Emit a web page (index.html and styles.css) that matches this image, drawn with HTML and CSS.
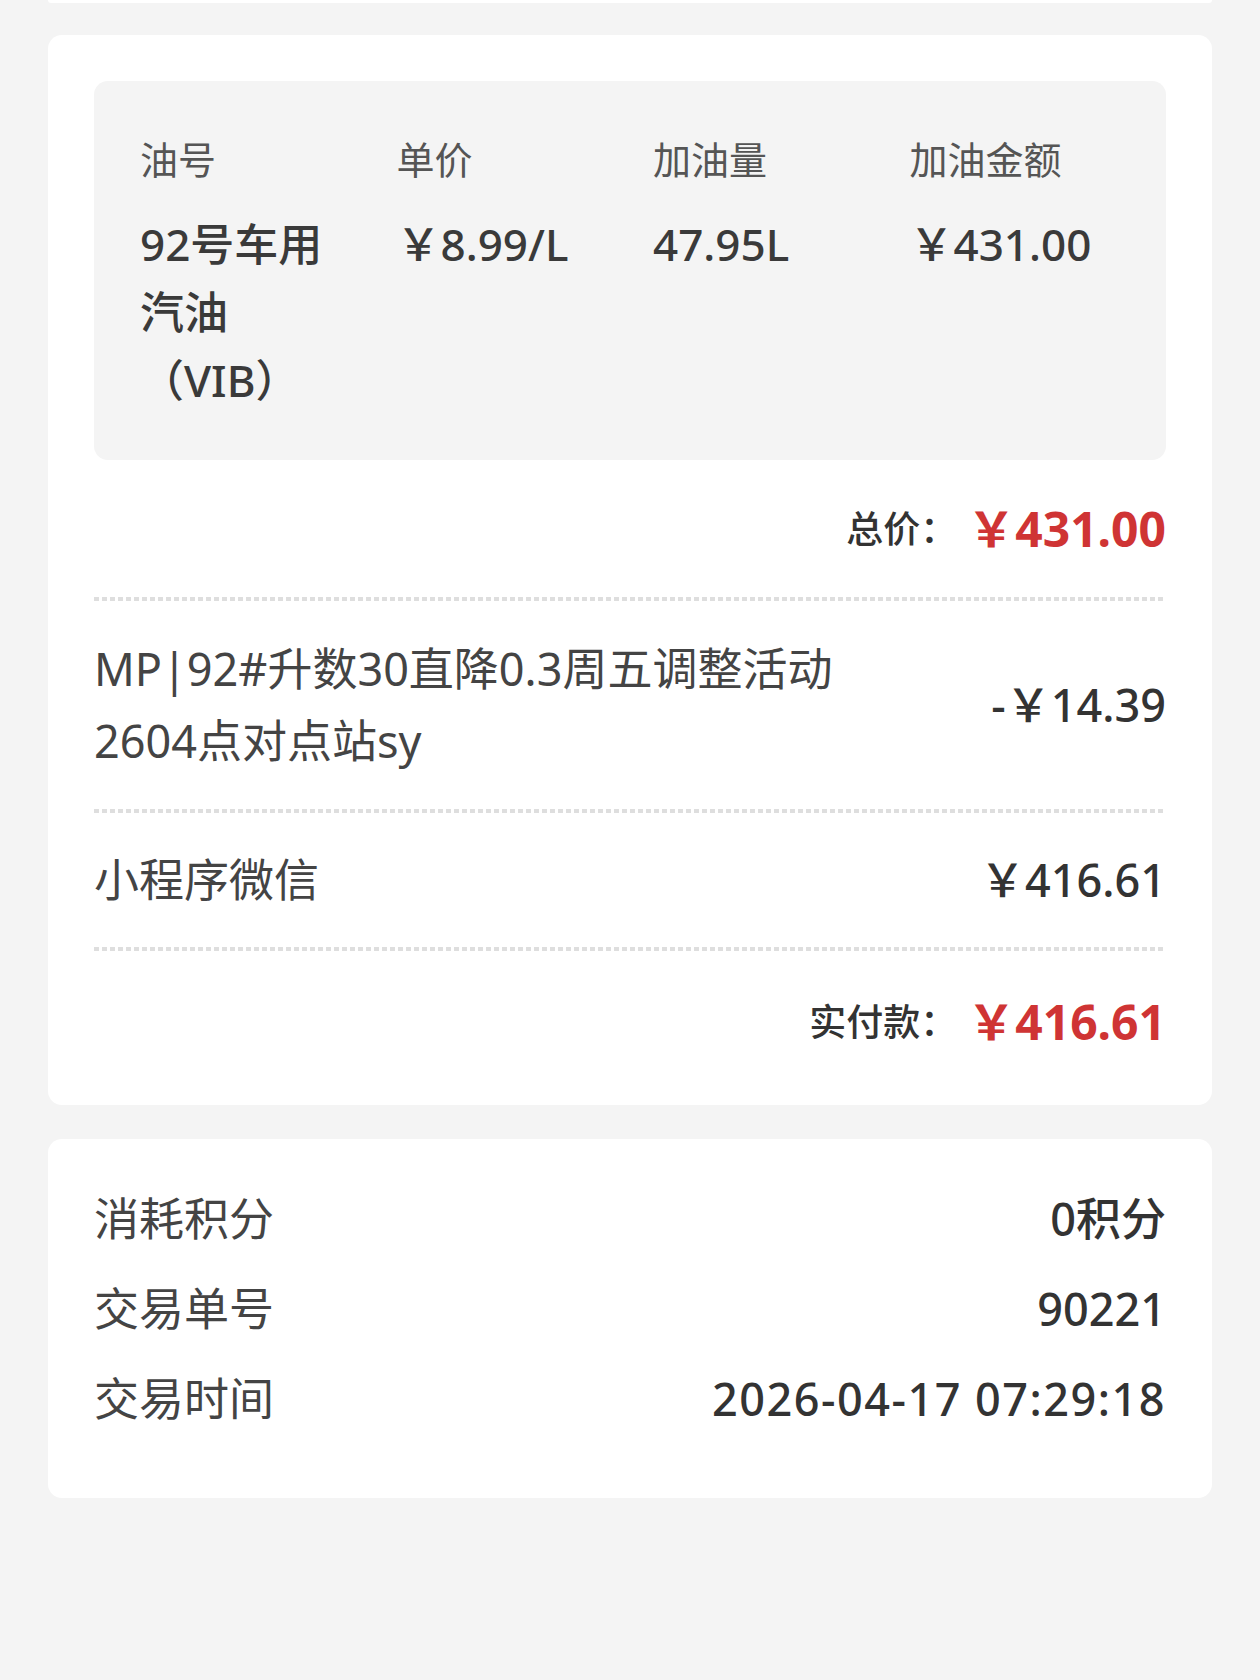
FILE: index.html
```html
<!DOCTYPE html>
<html lang="zh-CN">
<head>
    <meta charset="UTF-8">
    <meta name="viewport" content="width=device-width, initial-scale=1.0">
    <title>订单详情</title>
    <link rel="stylesheet" href="styles.css">
</head>
<body>
    <div class="page">
        <!-- bottom edge of the card above, scrolled out of view -->
        <div class="card-tail"></div>

        <section class="card">
            <div class="oil-box">
                <div class="oil-grid">
                    <div class="oil-head">油号</div>
                    <div class="oil-head">单价</div>
                    <div class="oil-head">加油量</div>
                    <div class="oil-head">加油金额</div>
                    <div class="oil-value">92号车用汽油（VIB）</div>
                    <div class="oil-value">￥8.99/L</div>
                    <div class="oil-value">47.95L</div>
                    <div class="oil-value">￥431.00</div>
                </div>
            </div>

            <div class="total-row">
                <span class="total-label">总价：</span>
                <span class="total-amount">￥431.00</span>
            </div>

            <div class="dots"></div>

            <div class="line-row discount">
                <div class="line-name">MP|92#升数30直降0.3周五调整活动2604点对点站sy</div>
                <div class="line-value">-￥14.39</div>
            </div>

            <div class="dots"></div>

            <div class="line-row">
                <div class="line-name">小程序微信</div>
                <div class="line-value">￥416.61</div>
            </div>

            <div class="dots"></div>

            <div class="total-row last">
                <span class="total-label">实付款：</span>
                <span class="total-amount">￥416.61</span>
            </div>
        </section>

        <section class="card info">
            <div class="info-row">
                <span class="info-label">消耗积分</span>
                <span class="info-value">0积分</span>
            </div>
            <div class="info-row">
                <span class="info-label">交易单号</span>
                <span class="info-value">90221</span>
            </div>
            <div class="info-row">
                <span class="info-label">交易时间</span>
                <span class="info-value time">2026-04-17 07:29:18</span>
            </div>
        </section>
    </div>
</body>
</html>
```

FILE: styles.css
```css
body {
    margin: 0;
    background-color: #f4f4f4;
    font-family: "Noto Sans", "Noto Sans CJK SC", sans-serif;
    color: #3a3a3a;
}

.page {
    padding: 0 48px;
}

.card-tail {
    height: 3px;
    background: #fff;
    border-radius: 0 0 4px 4px;
}

.card {
    background: #fff;
    border-radius: 14px;
    padding: 46px 46px 46px;
    margin-top: 32px;
}

.oil-box {
    background: #f4f4f4;
    border-radius: 14px;
    padding: 50px 0 46px 46px;
}

.oil-grid {
    display: grid;
    grid-template-columns: repeat(4, 1fr);
    row-gap: 23px;
}

.oil-head {
    font-size: 38px;
    line-height: 56px;
    color: #555;
}

.oil-value {
    font-size: 44px;
    line-height: 68px;
    font-weight: 500;
    color: #3a3a3a;
    padding-right: 50px;
}

.total-row {
    display: flex;
    justify-content: flex-end;
    align-items: center;
    padding: 37px 0 36px;
    line-height: 64px;
}

.total-row.last {
    padding: 39px 0 5px;
}

.total-label {
    font-size: 37px;
    font-weight: 500;
    color: #333;
}

.total-amount {
    font-size: 48px;
    font-weight: 700;
    color: #cf3434;
    margin-left: 10px;
}

.dots {
    height: 4px;
    background: repeating-linear-gradient(to right, #dedede 0 5px, transparent 5px 8px);
}

.line-row {
    display: flex;
    justify-content: space-between;
    align-items: center;
    padding: 35px 0;
    font-size: 45px;
    line-height: 64px;
}

.line-row.discount {
    padding: 32px 0;
    line-height: 72px;
}

.line-name {
    max-width: 800px;
    color: #444;
}

.line-value {
    font-weight: 500;
    color: #333;
}

.card.info {
    margin-top: 34px;
    padding: 48px 46px 67px;
    display: flex;
    flex-direction: column;
    gap: 26px;
}

.info-row {
    display: flex;
    justify-content: space-between;
    font-size: 45px;
    line-height: 64px;
}

.info-label {
    color: #444;
}

.info-value {
    font-weight: 500;
    color: #333;
}

.info-value.time {
    letter-spacing: 1.5px;
}
```
